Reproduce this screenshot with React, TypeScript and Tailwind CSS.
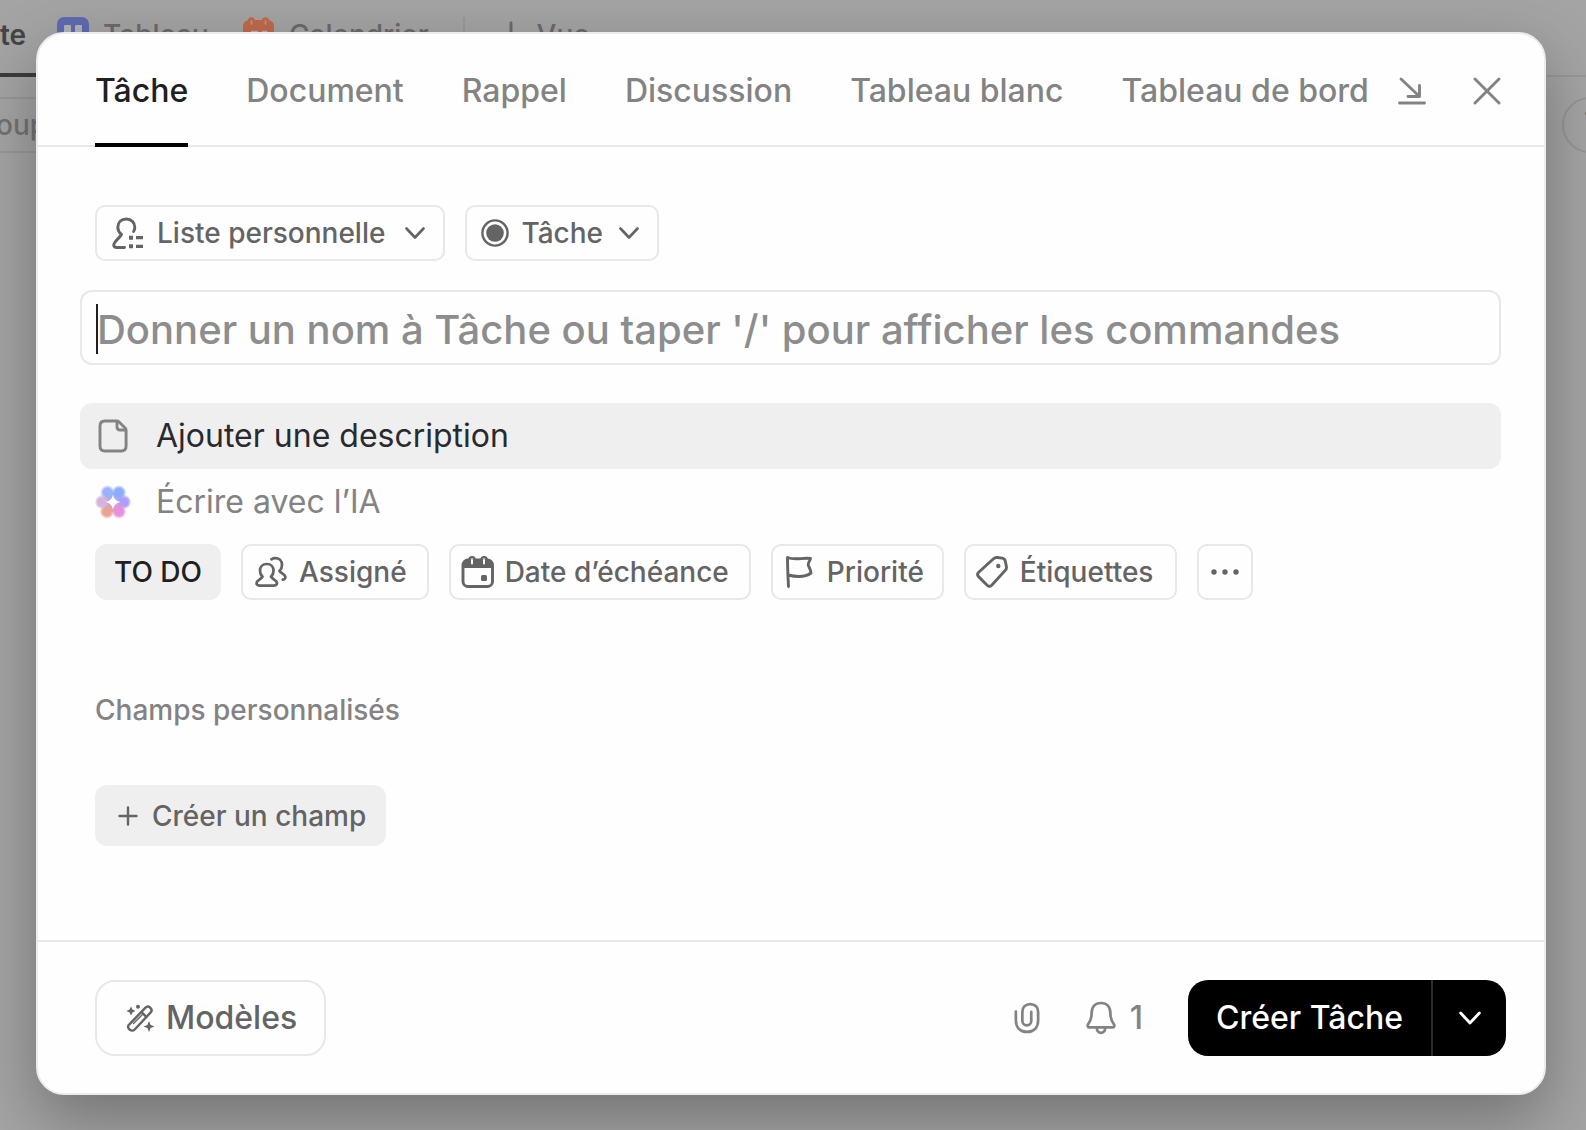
import React from "react";

type IconProps = { className?: string };

const stroke = {
  fill: "none",
  stroke: "currentColor",
  strokeWidth: 2.9,
  strokeLinecap: "round" as const,
  strokeLinejoin: "round" as const,
};

function ChevronDown({ className = "h-5 w-5" }: IconProps) {
  return (
    <svg viewBox="0 0 20 20" className={className} {...stroke} strokeWidth={2.6} aria-hidden="true">
      <path d="M1.500 5.500 10 14.500 18.500 5.500" />
    </svg>
  );
}

function PersonalListIcon() {
  return (
    <svg viewBox="-1 -1 34 34" className="h-[34px] w-[34px] shrink-0" {...stroke} aria-hidden="true">
      <path d="M12.500 30.500H4.500c-2.600 0-3.300-2-2.300-4C3.600 23.200 8 20.500 9.500 17.500 7 15.500 5.800 13 5.800 10.300 5.800 5.300 9.300 2 14.300 2s8.500 3.500 8.500 8.300c0 1.500-.4 3-1.200 4.200" />
      <path d="M17 20.700h4M17 29.300h4" strokeWidth={4} strokeLinecap="butt" />
      <path d="M24 20.700h7M24 29.300h7" strokeWidth={3.2} strokeLinecap="butt" />
    </svg>
  );
}

function TaskTypeIcon() {
  return (
    <svg viewBox="0 0 28 28" className="h-7 w-7 shrink-0" aria-hidden="true">
      <circle cx="14" cy="14" r="12.6" fill="none" stroke="currentColor" strokeWidth="2.4" />
      <circle cx="14" cy="14" r="8.8" fill="currentColor" />
    </svg>
  );
}

function DocIcon() {
  return (
    <svg viewBox="0 0 30 34" className="h-[34px] w-[30px] shrink-0" {...stroke} aria-hidden="true">
      <path d="M7 2h11.500c1.200 0 1.800.2 2.600 1l6 6c.8.8 1 1.500 1 2.600V27c0 3.500-1.500 5-5 5H7c-3.500 0-5-1.500-5-5V7c0-3.500 1.500-5 5-5Z" />
      <path d="M19 2.500v5.200c0 2.200 1 3.300 3.300 3.300h5.200" />
    </svg>
  );
}

const PETALS = [
  { cx: 12.5, cy: 7.5, color: "#9ab2fc" },
  { cx: 24, cy: 7.5, color: "#8aaefd" },
  { cx: 29, cy: 17, color: "#ae9dfb" },
  { cx: 24, cy: 26.5, color: "#e88fdc" },
  { cx: 12, cy: 26.5, color: "#e8a392" },
  { cx: 7, cy: 17, color: "#d6b2dc" },
];

function AiIcon() {
  return (
    <svg viewBox="0 0 36 34" className="h-[34px] w-9 shrink-0" aria-hidden="true">
      <defs>
        <linearGradient id="ai-core" x1="0" y1="0" x2="0" y2="1">
          <stop offset="0" stopColor="#a2b0fb" />
          <stop offset="1" stopColor="#e39fc4" />
        </linearGradient>
        {PETALS.map((p, i) => (
          <radialGradient key={i} id={`petal-${i}`}>
            <stop offset="0.6" stopColor={p.color} />
            <stop offset="1" stopColor={p.color} stopOpacity="0.2" />
          </radialGradient>
        ))}
      </defs>
      <circle cx="18" cy="17" r="10" fill="url(#ai-core)" />
      {PETALS.map((p, i) => (
        <circle key={i} cx={p.cx} cy={p.cy} r="7" fill={`url(#petal-${i})`} />
      ))}
      <path d="M18 9.500c1.200 4.800 2.700 6.300 7.500 7.500-4.800 1.200-6.300 2.700-7.500 7.500-1.200-4.800-2.700-6.300-7.500-7.500 4.800-1.200 6.300-2.700 7.500-7.500Z" fill="#fff" />
    </svg>
  );
}

function AssigneeIcon() {
  return (
    <svg viewBox="0 0 34 34" className="h-8 w-8 shrink-0" {...stroke} aria-hidden="true">
      <path d="M5 31.500c-3 0-3.800-1.800-3-3.800.9-2.400 4.900-3.400 6-5.700-1.800-1.700-2.700-3.700-2.700-6.300 0-4.200 2.900-7.200 7.200-7.200s7.200 3 7.200 7.200c0 2.600-.9 4.600-2.700 6.300 1.100 2.300 5.100 3.300 6 5.700.8 2 0 3.800-3 3.800Z" />
      <path d="M17.500 3.500c1.200-.8 2.500-1.200 4-1.200 4.300 0 7.200 3 7.200 7.200 0 2.600-.9 4.600-2.700 6.300 1.100 2.300 5.100 3.300 6 5.700.7 1.800-.3 3.300-2.500 3.600" />
    </svg>
  );
}

function DateIcon() {
  return (
    <svg viewBox="0 0 34 34" className="h-[34px] w-[34px] shrink-0" {...stroke} aria-hidden="true">
      <rect x="2" y="5" width="29.5" height="26.5" rx="5" />
      <path d="M2 13V9c0-3 1.500-4.500 4.500-4.500h20.500c3 0 4.500 1.500 4.500 4.500v4Z" fill="currentColor" stroke="none" />
      <path d="M8 8.500V5.200c0-4.300 6-4.300 6 0v3.300M20 8.500V5.200c0-4.300 6-4.300 6 0v3.300" strokeWidth={2} />
      <path d="M11 8.500V5M23 8.500V5" stroke="#fff" strokeWidth={2} />
      <rect x="20" y="20" width="6" height="6" rx="1.5" fill="currentColor" stroke="none" />
    </svg>
  );
}

function FlagIcon() {
  return (
    <svg viewBox="0 0 28 34" className="h-[34px] w-7 shrink-0" {...stroke} aria-hidden="true">
      <path d="M3.500 31.500C3 22 2.500 12 2.500 2.500 10 5.500 17 2.500 25.500 3.500c-.6 2.800-2.700 4.300-2.300 6.300.4 2.200 2.500 4.200 2.800 8.200-6 4.500-15 4-23 2" />
    </svg>
  );
}

function TagIcon() {
  return (
    <svg viewBox="0 0 32 34" className="h-[34px] w-8 shrink-0" {...stroke} aria-hidden="true">
      <path d="M2.700 17.300 17.500 3.800c1.200-1.100 2.200-1.500 3.800-1.300l5 .6c1.700.3 2.500 1 2.900 2.700l1.200 5.700c.3 1.600 0 2.700-1.200 3.900L15.700 30.300c-1.500 1.400-3 1.400-4.500 0l-8.400-8.400c-1.500-1.500-1.600-3.100-.1-4.600Z" />
      <circle cx="22.3" cy="11" r="2.2" fill="currentColor" stroke="none" />
    </svg>
  );
}

function WandIcon() {
  return (
    <svg viewBox="0 0 28 28" className="h-7 w-7 shrink-0" {...stroke} strokeWidth={2.4} aria-hidden="true">
      <path d="M2.900 20.800 19.500 3.700c2.900-2.900 8 1.400 5.200 4.700L8.700 25.500c-3.100 3-8.800-1.500-5.800-4.700Z" />
      <path d="M15.500 8l4.300 4.300" />
      <path d="M7.500 19.500 17 10" strokeWidth={1.4} />
      <path d="M5 2.500l1.400 3.100L9.500 7 6.400 8.400 5 11.500 3.600 8.400.5 7l3.100-1.400ZM23 17l1.600 3.900 3.900 1.600-3.900 1.600L23 28l-1.600-3.900-3.900-1.600 3.900-1.600Z" fill="currentColor" stroke="none" />
      <circle cx="12" cy="2.800" r="2" fill="currentColor" stroke="none" />
    </svg>
  );
}

function ClipIcon() {
  return (
    <svg viewBox="0 0 28 34" className="h-8 w-[26px] shrink-0" {...stroke} aria-hidden="true">
      <path d="M2 10v9.500C2 27 6.500 32 14 32s12-5 12-12.500v-9C26 5.500 22.800 2 17.500 2S9 5.500 9 10.500V20c0 3 2 5 4.800 5s4.800-2 4.800-5v-9.500" />
    </svg>
  );
}

function BellIcon() {
  return (
    <svg viewBox="0 0 32 36" className="h-[34px] w-[30px] shrink-0" {...stroke} aria-hidden="true">
      <path d="M6 13C6 6 9.800 2 16 2s10 4 10 11c0 6 1.500 8.500 3.600 11.500 1.200 1.900.6 3.500-1.400 3.500H3.800c-2 0-2.600-1.600-1.400-3.500C4.500 21.500 6 19 6 13Z" />
      <path d="M11.500 28.500c.3 7.300 8.700 7.300 9 0" />
    </svg>
  );
}

const TABS = ["Tâche", "Document", "Rappel", "Discussion", "Tableau blanc", "Tableau de bord"];

const CHIP =
  "flex h-14 items-center rounded-[10px] border-2 border-[#e8e8e8] text-[28px] leading-8 font-medium text-[#646464]";

function Backdrop() {
  return (
    <div className="flex flex-col text-[28px] leading-8 font-medium text-[#6a6a6a]" aria-hidden="true">
      <div className="flex h-[77px] items-start gap-[34px] border-b-2 border-[#989898] pt-[17px]">
        <div className="-ml-9 h-[60px] w-[76px] border-b-4 border-[#3c3c3c] pt-0.5 pl-9 font-semibold text-[#444444]">te</div>
        <div className="-ml-[17px] flex gap-3.5">
          <svg viewBox="0 0 32 32" className="h-8 w-8">
            <rect width="32" height="32" rx="7" fill="#5f6bb0" />
            <rect x="7" y="8" width="7" height="18" rx="1" fill="#b4b4b8" />
            <rect x="18" y="8" width="7" height="12" rx="1" fill="#b4b4b8" />
          </svg>
          <span className="pt-0.5">Tableau</span>
        </div>
        <div className="flex gap-3.5">
          <svg viewBox="0 0 32 32" className="h-8 w-8">
            <rect y="3" width="31" height="29" rx="6" fill="#c06a4b" />
            <path d="M6 8V4.500c0-4 5-4 5 0V8M20 8V4.500c0-4 5-4 5 0V8" fill="#c06a4b" stroke="#c06a4b" strokeWidth="2.5" />
            <path d="M8.500 4v3M22.500 4v3" fill="none" stroke="#a4a4a4" strokeWidth="1.5" strokeLinecap="round" />
            <path d="M8 15h6v5H8M19 15h4v8" fill="none" stroke="#b4b4b4" strokeWidth="2.5" />
          </svg>
          <span className="pt-0.5">Calendrier</span>
        </div>
        <div className="h-12 w-0.5 bg-[#989898]" />
        <div className="flex gap-3.5">
          <svg viewBox="0 0 24 32" className="h-8 w-6" {...stroke}>
            <path d="M12 6v22M1 17h22" />
          </svg>
          <span className="pt-0.5">Vue</span>
        </div>
      </div>
      <div className="flex justify-between pt-5">
        <div className="-ml-2 h-14 w-16 border-y-2 border-[#989898] pl-1 leading-[52px] text-[#727272]">oup</div>
        <div className="-mr-8 h-14 w-14 rounded-full border-2 border-[#959595] pl-5 leading-[48px]">T</div>
      </div>
    </div>
  );
}

export default function App() {
  return (
    <div className="relative min-h-screen overflow-hidden bg-[#a4a4a4] font-['Inter','Liberation_Sans',sans-serif]">
      <Backdrop />
      <div className="absolute inset-0 flex pt-8 pr-10 pb-[35px] pl-9">
        <div
          role="dialog"
          aria-label="Créer une tâche"
          className="flex w-full flex-col rounded-[28px] border-2 border-[#ececec] bg-[#fefefe] shadow-[0_24px_64px_rgba(0,0,0,0.3)]"
        >
          <header className="flex h-[113px] shrink-0 items-stretch justify-between border-b-2 border-[#e8e8e8] pr-[42px] pl-[57px]">
            <nav className="-mb-0.5 flex gap-[58px]" role="tablist">
              {TABS.map((tab, i) => (
                <button
                  key={tab}
                  type="button"
                  role="tab"
                  aria-selected={i === 0}
                  className={
                    i === 0
                      ? "border-b-4 border-black pt-1 text-[32px] font-medium whitespace-nowrap text-[#202020]"
                      : "border-b-4 border-transparent pt-1 text-[32px] font-medium whitespace-nowrap text-[#838383]"
                  }
                >
                  {tab}
                </button>
              ))}
            </nav>
            <div className="flex items-center gap-[45px] text-[#838383]">
              <button type="button" aria-label="Réduire">
                <svg viewBox="0 0 30 30" className="h-[30px] w-[30px]" {...stroke}>
                  <path d="M4 4l18 17M22.500 10.500V21.500H11M2.500 28h25" />
                </svg>
              </button>
              <button type="button" aria-label="Fermer">
                <svg viewBox="0 0 30 30" className="h-[30px] w-[30px]" {...stroke}>
                  <path d="M3 4l24 24M27 4 3 28" />
                </svg>
              </button>
            </div>
          </header>

          <main className="flex flex-1 flex-col pr-[43px] pl-[42px]">
            <div className="mt-[58px] flex gap-5 pl-[15px]">
              <button type="button" className={`${CHIP} gap-3 pr-[18px] pl-3.5`}>
                <PersonalListIcon />
                Liste personnelle
                <ChevronDown className="ml-2 h-5 w-5" />
              </button>
              <button type="button" className={`${CHIP} gap-3 pr-[18px] pl-3.5`}>
                <TaskTypeIcon />
                Tâche
                <ChevronDown className="ml-1 h-5 w-5" />
              </button>
            </div>

            <div className="relative mt-[29px]">
              <input
                aria-label="Nom de la tâche"
                placeholder="Donner un nom à Tâche ou taper '/' pour afficher les commandes"
                className="h-[75px] w-full rounded-xl border-2 border-[#e8e8e8] bg-transparent px-[15px] pt-1 text-[40px] font-medium outline-none placeholder:text-[#8d8d8d]"
              />
              <span className="absolute top-3.5 left-4 h-[50px] w-0.5 bg-[#202020]" />
            </div>

            <button
              type="button"
              className="mt-[38px] flex h-[66px] items-center gap-7 rounded-xl bg-[#efefef] pl-[18px] text-[32px] text-[#2a2a2e]"
            >
              <span className="text-[#838383]"><DocIcon /></span>
              Ajouter une description
            </button>
            <button type="button" className="flex h-[66px] items-center gap-[25px] pl-[15px] text-[32px] text-[#838383]">
              <AiIcon />
              Écrire avec l’IA
            </button>

            <div className="mt-[9px] flex gap-5 pl-[15px]">
              <button
                type="button"
                className="flex h-14 items-center rounded-xl bg-[#efefef] px-[19px] text-[28px] font-medium text-[#202020]"
              >
                TO DO
              </button>
              <button type="button" className={`${CHIP} gap-3 pr-5 pl-3`}>
                <AssigneeIcon />
                Assigné
              </button>
              <button type="button" className={`${CHIP} gap-2.5 pr-5 pl-2.5`}>
                <DateIcon />
                Date d’échéance
              </button>
              <button type="button" className={`${CHIP} gap-3.5 pr-[18px] pl-3`}>
                <FlagIcon />
                Priorité
              </button>
              <button type="button" className={`${CHIP} gap-3 pr-[22px] pl-2.5`}>
                <TagIcon />
                Étiquettes
              </button>
              <button type="button" aria-label="Plus" className={`${CHIP} w-14 justify-center`}>
                <svg viewBox="0 0 30 8" className="h-2 w-[30px]" fill="currentColor">
                  <circle cx="4" cy="4" r="2.7" />
                  <circle cx="15" cy="4" r="2.7" />
                  <circle cx="26" cy="4" r="2.7" />
                </svg>
              </button>
            </div>

            <h2 className="mt-[94px] pl-[15px] text-[28px] leading-8 font-medium text-[#838383]">Champs personnalisés</h2>
            <div className="mt-[59px] pl-[15px]">
              <button
                type="button"
                className="flex h-[61px] items-center gap-3.5 rounded-xl bg-[#efefef] pr-5 pl-[23px] text-[28px] font-medium text-[#646464]"
              >
                <svg viewBox="0 0 20 20" className="h-5 w-5" {...stroke} strokeWidth={2.4}>
                  <path d="M10 1.500v17M1.500 10h17" />
                </svg>
                Créer un champ
              </button>
            </div>
          </main>

          <footer className="flex h-[153px] shrink-0 items-center justify-between border-t-2 border-[#e8e8e8] pr-[38px] pl-[57px]">
            <button
              type="button"
              className="flex h-[76px] items-center gap-3 rounded-[20px] border-2 border-[#e8e8e8] pr-[27px] pl-[29px] text-[32px] font-medium text-[#646464]"
            >
              <WandIcon />
              Modèles
            </button>
            <div className="flex items-center text-[#838383]">
              <button type="button" aria-label="Joindre un fichier" className="mr-[46px]">
                <ClipIcon />
              </button>
              <button type="button" aria-label="Notifications" className="mr-[45px] flex items-center gap-3.5 text-[32px] font-medium">
                <BellIcon />
                1
              </button>
              <div className="flex h-[76px] overflow-hidden rounded-[20px] bg-black text-white">
                <button type="button" className="border-r-2 border-[#2c2c2c] px-7 text-[32px] font-medium">
                  Créer Tâche
                </button>
                <button type="button" aria-label="Autres options" className="flex w-[73px] items-center justify-center">
                  <ChevronDown className="h-[22px] w-[22px]" />
                </button>
              </div>
            </div>
          </footer>
        </div>
      </div>
    </div>
  );
}
